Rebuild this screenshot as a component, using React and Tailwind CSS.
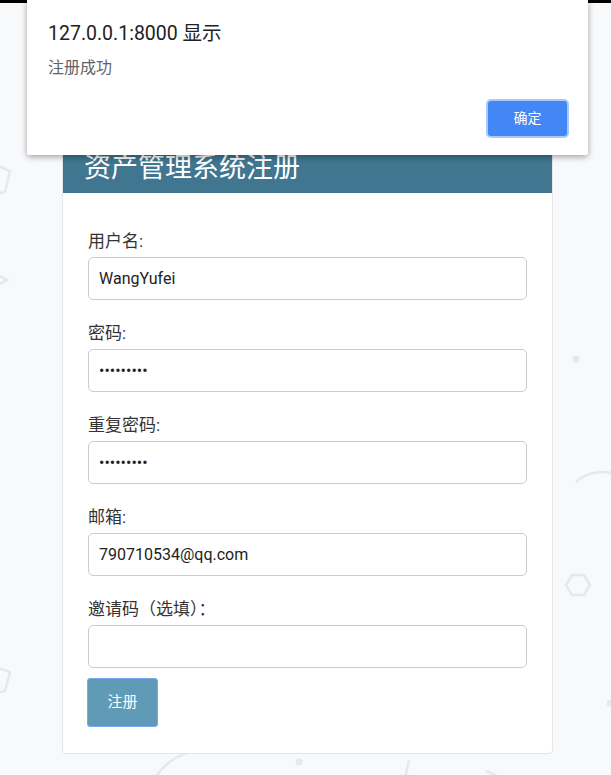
import React from 'react';

const font = { fontFamily: 'Roboto, "Noto Sans CJK SC", sans-serif' };

function Field({ label, type = 'text', value = '' }) {
  return (
    <div className="mb-[22px]">
      <label className="block text-[17px] leading-[22px] text-[#333] mb-[5px]">{label}</label>
      <input
        type={type}
        defaultValue={value}
        readOnly
        className="block w-full h-[43px] px-[10px] text-[16px] text-[#222] bg-white border border-[#cccccc] rounded-[5px] outline-none"
        style={font}
      />
    </div>
  );
}

export default function App() {
  return (
    <div className="relative h-[775px] bg-[#f8f9fb] overflow-hidden" style={font}>
      {/* faint decorative shapes in the page background */}
      <svg className="absolute inset-0" width="611" height="775" fill="none" stroke="#e7e8eb" strokeWidth="2.5">
        <polyline points="-8,163 10,171 5,192 -9,195" />
        <polyline points="0,276 7,280 0,284" />
        <circle cx="576" cy="359" r="3.5" fill="#e8e9ec" stroke="none" />
        <path d="M576 482 A 40 40 0 0 1 615 474" />
        <polygon points="566,585 572,575 584,575 590,585 584,595 572,595" />
        <rect x="607" y="700" width="6" height="6" fill="#e8e9ec" stroke="none" />
        <polyline points="-8,666 10,672 5,691 -9,694" />
        <path d="M155 778 A 60 60 0 0 1 225 753" />
        <circle cx="299" cy="762" r="3.5" fill="#e8e9ec" stroke="none" />
        <line x1="409" y1="760" x2="405" y2="778" />
        <polyline points="486,771 496,775" />
      </svg>

      <div className="relative h-[3px] bg-black" />

      {/* register card */}
      <div className="relative ml-[62px] mt-[139px] w-[491px] bg-white border border-[#e3e5e8] rounded-[4px]">
        <div className="h-[50px] bg-[#40768f] px-[21px] flex items-center">
          <h3 className="text-[27px] leading-[30px] text-white font-normal">资产管理系统注册</h3>
        </div>
        <div className="pt-[37px] pb-[26px] pl-[25px] pr-[25px]">
          <Field label="用户名:" value="WangYufei" />
          <Field label="密码:" type="password" value="123456789" />
          <Field label="重复密码:" type="password" value="123456789" />
          <Field label="邮箱:" value="790710534@qq.com" />
          <div>
            <label className="block text-[17px] leading-[22px] text-[#333] mb-[5px]">邀请码（选填）：</label>
            <input
              type="text"
              readOnly
              className="block w-full h-[43px] px-[10px] text-[16px] bg-white border border-[#cccccc] rounded-[5px] outline-none"
              style={font}
            />
          </div>
          <button
            className="mt-[10px] -ml-[1px] w-[71px] h-[49px] bg-[#5f9bb6] border border-[#7aa8f0] rounded-[3px] text-white text-[15px]"
            style={font}
          >
            注册
          </button>
        </div>
      </div>

      {/* alert dialog */}
      <div className="absolute top-0 left-[27px] w-[561px] h-[155px] bg-white rounded-b-[2px] shadow-[0_2px_6px_rgba(0,0,0,0.35)] flex flex-col">
        <div className="pl-[21px] pt-[22px] text-[19.5px] leading-[24px] text-[#202124]">127.0.0.1:8000 显示</div>
        <div className="pl-[21px] mt-[12px] text-[16px] leading-[20px] text-[#5f6368]">注册成功</div>
        <div className="flex justify-end pr-[19px] mt-[21px]">
          <button
            className="w-[83px] h-[39px] bg-[#4386f5] border-2 border-[#aac8fb] rounded-[5px] text-white text-[14px]"
            style={font}
          >
            确定
          </button>
        </div>
      </div>
    </div>
  );
}
